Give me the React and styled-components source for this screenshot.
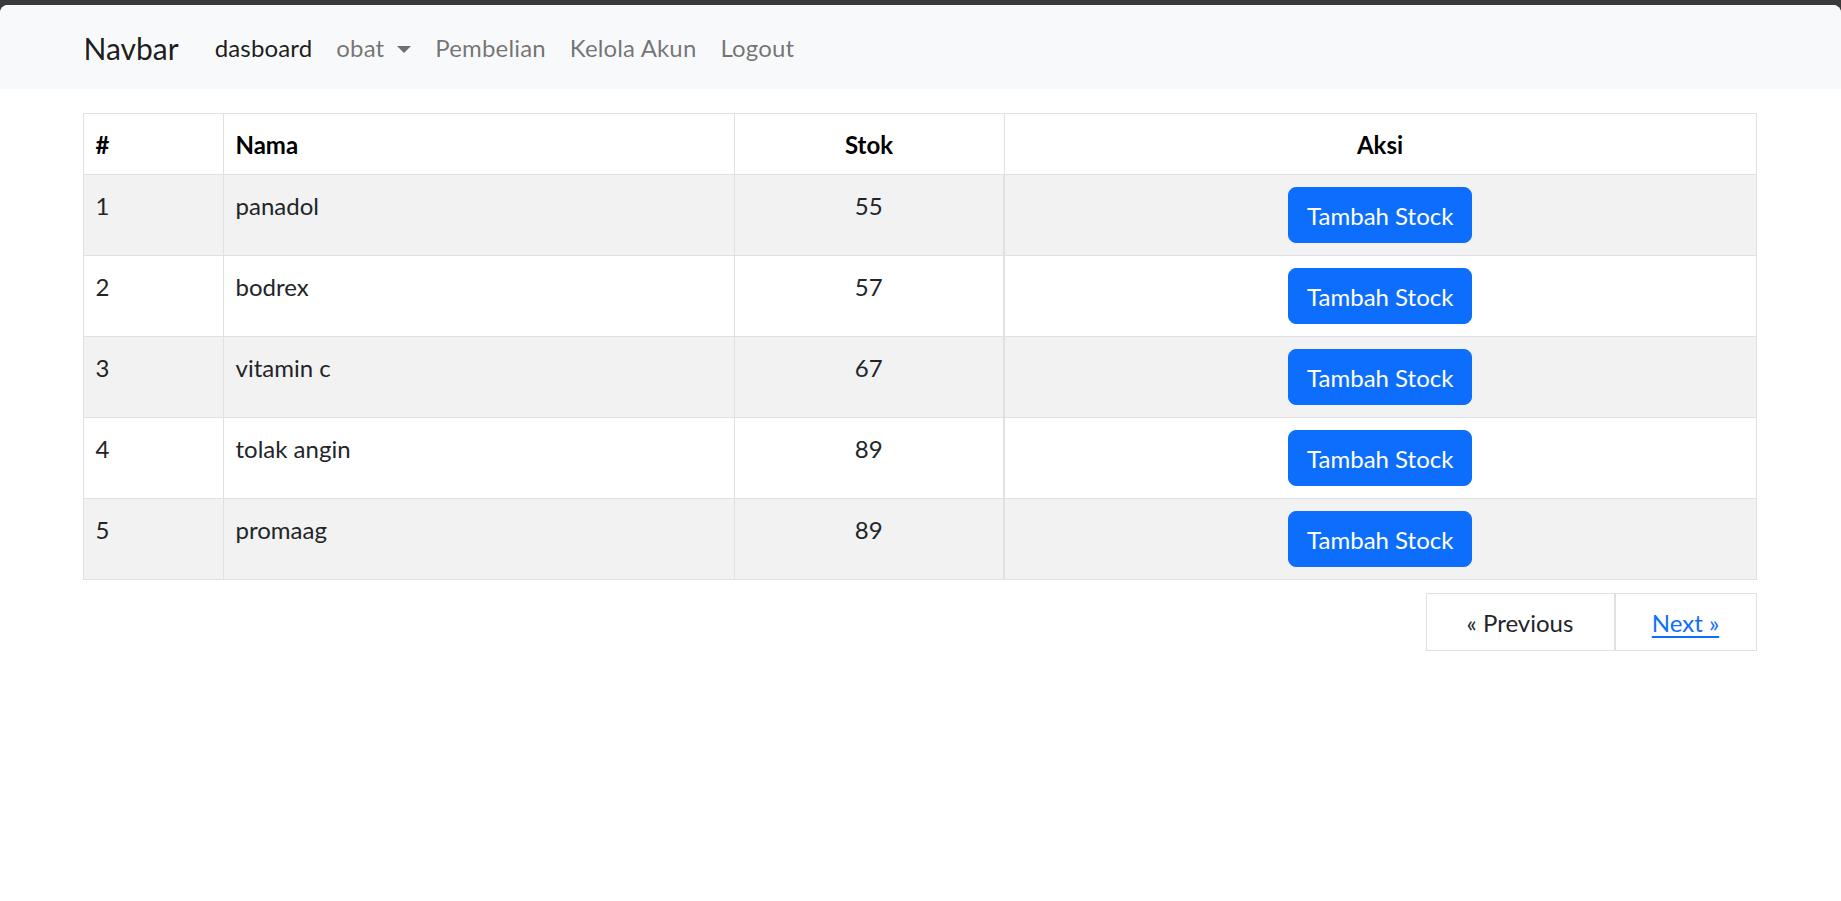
import React from 'react';
import styled, { createGlobalStyle } from 'styled-components';

const GlobalStyle = createGlobalStyle`
  body {
    margin: 0;
    background: #3a3a3a;
    font-family: Lato, "Noto Sans", sans-serif;
    color: #212529;
  }
  * { box-sizing: border-box; }
`;

const Page = styled.div`
  margin-top: 5px;
  min-height: calc(100vh - 5px);
  background: #fff;
  border-radius: 8px 8px 0 0;
  overflow: hidden;
`;

const Container = styled.div`
  max-width: 1710px;
  margin: 0 auto;
  padding: 0 18px;
`;

const Navbar = styled.nav`
  background: #f8f9fa;
  padding: 12px 0;
`;

const NavInner = styled(Container)`
  display: flex;
  align-items: center;
`;

const Brand = styled.a`
  font-size: 30px;
  line-height: 45px;
  padding: 8.5px 0 6.5px;
  margin-right: 24px;
  color: rgba(0, 0, 0, 0.9);
  text-decoration: none;
`;

const NavLink = styled.a`
  display: flex;
  align-items: center;
  font-size: 24px;
  line-height: 36px;
  letter-spacing: 0.15px;
  padding: 13px 12px 11px;
  color: ${(p) => (p.$active ? 'rgba(0, 0, 0, 0.9)' : 'rgba(0, 0, 0, 0.55)')};
  text-decoration: none;
`;

const Caret = styled.span`
  display: inline-block;
  margin-left: 13px;
  margin-top: 2px;
  border-top: 7px solid rgba(0, 0, 0, 0.55);
  border-left: 7px solid transparent;
  border-right: 7px solid transparent;
`;

const Content = styled(Container)`
  padding: 24px 19px 0 17px;
`;

const Table = styled.table`
  width: 100%;
  table-layout: fixed;
  border-collapse: collapse;
  font-size: 24px;
  line-height: 36px;
  color: #212529;
`;

const Th = styled.th`
  padding: 13px 12px 11px;
  border: 1px solid #dee2e6;
  font-weight: 700;
  color: #000;
  text-align: ${(p) => p.$align || 'left'};
`;

const Row = styled.tr`
  background: ${(p) => (p.$striped ? '#f2f2f2' : '#fff')};
`;

const Td = styled.td`
  padding: 13px 12px 11px;
  border: 1px solid #dee2e6;
  vertical-align: top;
  text-align: ${(p) => p.$align || 'left'};
`;

const ActionTd = styled(Td)`
  padding: 12px;
  border-left: 2px solid #dee2e6;
  text-align: center;
`;

const Button = styled.button`
  font-family: inherit;
  font-size: 24px;
  line-height: 36px;
  padding: 10px 18px 8px;
  color: #fff;
  background: #0d6efd;
  border: 1px solid #0d6efd;
  border-radius: 8px;
  cursor: pointer;
`;

const Pagination = styled.div`
  display: flex;
  justify-content: flex-end;
  margin-top: 13px;
`;

const PageLink = styled.a`
  display: block;
  width: ${(p) => p.$width}px;
  text-align: center;
  font-size: 24px;
  line-height: 36px;
  padding: 11px 0 9px;
  border: 1px solid #dee2e6;
  color: ${(p) => (p.$link ? '#0d6efd' : '#212529')};
  text-decoration: ${(p) => (p.$link ? 'underline' : 'none')};
  text-underline-offset: 4px;
`;

const obat = [
  { nama: 'panadol', stok: 55 },
  { nama: 'bodrex', stok: 57 },
  { nama: 'vitamin c', stok: 67 },
  { nama: 'tolak angin', stok: 89 },
  { nama: 'promaag', stok: 89 },
];

const App = () => {
  return (
    <Page>
      <GlobalStyle />
      <Navbar>
        <NavInner>
          <Brand href="#">Navbar</Brand>
          <NavLink $active href="#">dasboard</NavLink>
          <NavLink href="#">obat<Caret /></NavLink>
          <NavLink href="#">Pembelian</NavLink>
          <NavLink href="#">Kelola Akun</NavLink>
          <NavLink href="#">Logout</NavLink>
        </NavInner>
      </Navbar>
      <Content>
        <Table>
          <colgroup>
            <col style={{ width: '140px' }} />
            <col style={{ width: '511px' }} />
            <col style={{ width: '270px' }} />
            <col />
          </colgroup>
          <thead>
            <tr>
              <Th>#</Th>
              <Th>Nama</Th>
              <Th $align="center">Stok</Th>
              <Th $align="center">Aksi</Th>
            </tr>
          </thead>
          <tbody>
            {obat.map((item, i) => (
              <Row key={i} $striped={i % 2 === 0}>
                <Td>{i + 1}</Td>
                <Td>{item.nama}</Td>
                <Td $align="center">{item.stok}</Td>
                <ActionTd>
                  <Button>Tambah Stock</Button>
                </ActionTd>
              </Row>
            ))}
          </tbody>
        </Table>
        <Pagination>
          <PageLink $width={189}>« Previous</PageLink>
          <PageLink $width={142} $link href="#">Next »</PageLink>
        </Pagination>
      </Content>
    </Page>
  );
};

export default App;
